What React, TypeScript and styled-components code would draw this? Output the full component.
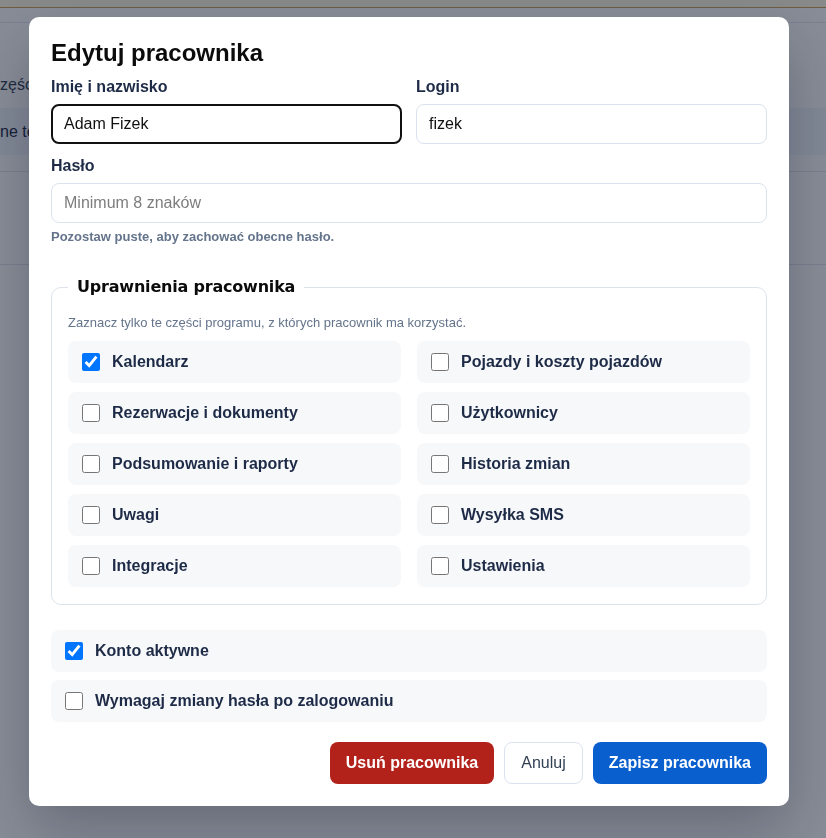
import React from "react";
import styled, { createGlobalStyle } from "styled-components";

const GlobalStyle = createGlobalStyle`
  * { box-sizing: border-box; }
  html, body { margin: 0; padding: 0; }
  body {
    font-family: "Liberation Sans", Arial, sans-serif;
    background: #ffffff;
    overflow: hidden;
  }
`;

/* ---------- page behind the dialog ---------- */

const BgPage = styled.div`
  height: 100vh;
  background: #ffffff;
  color: #1e2b47;
  font-size: 16px;
  overflow: hidden;
`;

const TopStrip = styled.div`
  height: 8px;
  background: #fffbe8;
  border-bottom: 1px solid #c9a35c;
`;

const SubHeader = styled.div`
  height: 15px;
  border-bottom: 1px solid #e4e9f0;
`;

const Intro = styled.div`
  height: 85px;
  padding-top: 52px;
  line-height: 20px;
  text-indent: -8px;
  color: #334155;
  white-space: nowrap;
`;

const Band = styled.div`
  height: 47px;
  line-height: 47px;
  background: #f1f6fc;
  color: #1e2b47;
  white-space: nowrap;
`;

const BgRow = styled.div<{ $h: number }>`
  height: ${(p) => p.$h}px;
  border-bottom: 1px solid #dfe5ee;
`;

/* ---------- dialog ---------- */

const Overlay = styled.div`
  position: fixed;
  inset: 0;
  background: rgba(15, 23, 42, 0.49);
  display: flex;
  justify-content: center;
  align-items: flex-start;
  padding: 17px 8px 0 0;
`;

const Dialog = styled.div`
  width: 760px;
  background: #ffffff;
  border-radius: 10px;
  padding: 22px;
  box-shadow: 0 24px 60px rgba(15, 23, 42, 0.28);
`;

const Title = styled.h2`
  margin: 0 0 10px;
  font-size: 24px;
  line-height: 28px;
  font-weight: 700;
  color: #0b0b0b;
`;

const FieldGrid = styled.div`
  display: grid;
  grid-template-columns: 1fr 1fr;
  column-gap: 14px;
`;

const Field = styled.div<{ $span?: boolean }>`
  display: flex;
  flex-direction: column;
  grid-column: ${(p) => (p.$span ? "1 / -1" : "auto")};
  margin-bottom: 12px;
`;

const Label = styled.label`
  font-size: 16px;
  line-height: 20px;
  font-weight: 700;
  color: #1e2b47;
  margin-bottom: 7px;
`;

const Input = styled.input<{ $focused?: boolean }>`
  height: 40px;
  width: 100%;
  border-radius: 8px;
  border: ${(p) => (p.$focused ? "2px solid #111111" : "1px solid #dbe3ee")};
  padding: 0 ${(p) => (p.$focused ? 11 : 12)}px;
  font-family: inherit;
  font-size: 16px;
  color: #111111;
  background: #ffffff;
  outline: none;

  &::placeholder {
    color: #7d7d7d;
  }
`;

const Hint = styled.div`
  margin-top: -6px;
  font-size: 13px;
  line-height: 16px;
  font-weight: 700;
  color: #64748b;
`;

const Group = styled.fieldset`
  margin: 32px 0 0;
  padding: 16px 16px 17px;
  border: 1px solid #dde3ed;
  border-radius: 10px;
  min-width: 0;
`;

const Legend = styled.legend`
  padding: 0 9px;
  font-family: "DejaVu Sans", "Liberation Sans", sans-serif;
  font-size: 16px;
  line-height: 20px;
  font-weight: 700;
  letter-spacing: -0.2px;
  color: #0b0b0b;
`;

const GroupNote = styled.p`
  margin: 1px 0 9px;
  font-size: 13px;
  line-height: 18px;
  color: #64748b;
`;

const OptionGrid = styled.div`
  display: grid;
  grid-template-columns: 1fr 1fr;
  column-gap: 16px;
  row-gap: 9px;
`;

const OptionRow = styled.label`
  display: flex;
  align-items: center;
  gap: 12px;
  height: 42px;
  padding: 0 14px;
  border-radius: 8px;
  background: #f7f8fa;
  font-size: 16px;
  font-weight: 700;
  color: #1e2b47;
  cursor: pointer;
`;

const Check = styled.input.attrs({ type: "checkbox" })`
  width: 18px;
  height: 18px;
  margin: 0;
  flex: none;
`;

const Toggles = styled.div`
  display: flex;
  flex-direction: column;
  gap: 8px;
  margin-top: 25px;
`;

const Actions = styled.div`
  display: flex;
  justify-content: flex-end;
  gap: 10px;
  margin-top: 20px;
`;

const Button = styled.button<{ $tone: "danger" | "ghost" | "primary" }>`
  height: 42px;
  padding: 0 16px;
  border-radius: 8px;
  font-family: inherit;
  font-size: 16px;
  cursor: pointer;
  font-weight: ${(p) => (p.$tone === "ghost" ? 400 : 700)};
  color: ${(p) => (p.$tone === "ghost" ? "#334155" : "#ffffff")};
  background: ${(p) =>
    p.$tone === "danger" ? "#b3221a" : p.$tone === "primary" ? "#0a5fce" : "#ffffff"};
  border: ${(p) => (p.$tone === "ghost" ? "1px solid #dbe3ee" : "none")};
`;

const permissions: { label: string; checked: boolean }[] = [
  { label: "Kalendarz", checked: true },
  { label: "Pojazdy i koszty pojazdów", checked: false },
  { label: "Rezerwacje i dokumenty", checked: false },
  { label: "Użytkownicy", checked: false },
  { label: "Podsumowanie i raporty", checked: false },
  { label: "Historia zmian", checked: false },
  { label: "Uwagi", checked: false },
  { label: "Wysyłka SMS", checked: false },
  { label: "Integracje", checked: false },
  { label: "Ustawienia", checked: false },
];

export default function App() {
  return (
    <>
      <GlobalStyle />
      <BgPage>
        <TopStrip />
        <SubHeader />
        <Intro>części</Intro>
        <Band>ne terminy</Band>
        <BgRow $h={17} />
        <BgRow $h={93} />
      </BgPage>

      <Overlay>
        <Dialog role="dialog" aria-labelledby="edit-title">
          <Title id="edit-title">Edytuj pracownika</Title>

          <FieldGrid>
            <Field>
              <Label htmlFor="full-name">Imię i nazwisko</Label>
              <Input id="full-name" $focused defaultValue="Adam Fizek" />
            </Field>
            <Field>
              <Label htmlFor="login">Login</Label>
              <Input id="login" defaultValue="fizek" />
            </Field>
            <Field $span>
              <Label htmlFor="password">Hasło</Label>
              <Input id="password" type="password" placeholder="Minimum 8 znaków" />
            </Field>
          </FieldGrid>
          <Hint>Pozostaw puste, aby zachować obecne hasło.</Hint>

          <Group>
            <Legend>Uprawnienia pracownika</Legend>
            <GroupNote>
              Zaznacz tylko te części programu, z których pracownik ma korzystać.
            </GroupNote>
            <OptionGrid>
              {permissions.map((p) => (
                <OptionRow key={p.label}>
                  <Check defaultChecked={p.checked} />
                  {p.label}
                </OptionRow>
              ))}
            </OptionGrid>
          </Group>

          <Toggles>
            <OptionRow>
              <Check defaultChecked />
              Konto aktywne
            </OptionRow>
            <OptionRow>
              <Check />
              Wymagaj zmiany hasła po zalogowaniu
            </OptionRow>
          </Toggles>

          <Actions>
            <Button $tone="danger">Usuń pracownika</Button>
            <Button $tone="ghost">Anuluj</Button>
            <Button $tone="primary">Zapisz pracownika</Button>
          </Actions>
        </Dialog>
      </Overlay>
    </>
  );
}
